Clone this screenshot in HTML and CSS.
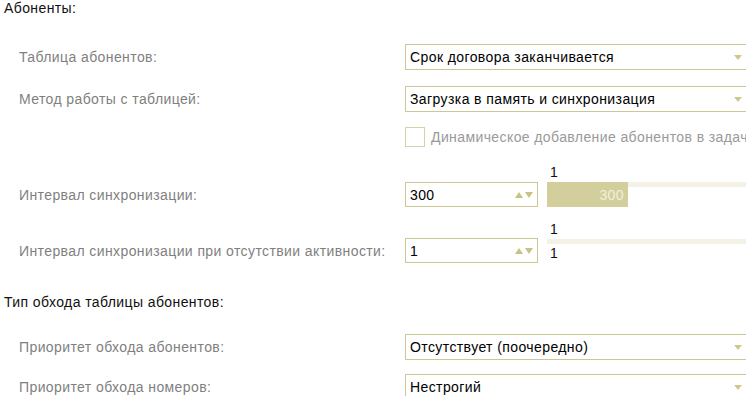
FILE: index.html
```html
<!DOCTYPE html>
<html>
<head>
<meta charset="utf-8">
<title>Абоненты</title>
<link rel="stylesheet" href="styles.css">
</head>
<body>
<div class="form">
  <div class="section">Абоненты:</div>

  <div class="row row-first">
    <div class="label">Таблица абонентов:</div>
    <div class="field select"><span class="value">Срок договора заканчивается</span><span class="drop"></span></div>
  </div>

  <div class="row row-second">
    <div class="label">Метод работы с таблицей:</div>
    <div class="field select"><span class="value">Загрузка в память и синхронизация</span><span class="drop"></span></div>
  </div>

  <div class="row row-check">
    <div class="label"></div>
    <div class="check-wrap"><span class="check"></span><span class="check-text">Динамическое добавление абонентов в задачу</span></div>
  </div>

  <div class="row row-slider">
    <div class="label">Интервал синхронизации:</div>
    <div class="spin-line">
      <div class="field spin"><span class="value">300</span><span class="arrows"><span class="up"></span><span class="down"></span></span></div>
      <div class="slider">
        <span class="min">1</span>
        <div class="track"><div class="fill" style="width: 81px"><span>300</span></div></div>
      </div>
    </div>
  </div>

  <div class="row row-slider2">
    <div class="label">Интервал синхронизации при отсутствии активности:</div>
    <div class="spin-line">
      <div class="field spin"><span class="value">1</span><span class="arrows"><span class="up"></span><span class="down"></span></span></div>
      <div class="slider slider-empty">
        <span class="min">1</span>
        <div class="track"></div>
        <span class="cur">1</span>
      </div>
    </div>
  </div>

  <div class="section section-second">Тип обхода таблицы абонентов:</div>

  <div class="row row-third">
    <div class="label">Приоритет обхода абонентов:</div>
    <div class="field select"><span class="value">Отсутствует (поочередно)</span><span class="drop"></span></div>
  </div>

  <div class="row row-fourth">
    <div class="label">Приоритет обхода номеров:</div>
    <div class="field select"><span class="value">Нестрогий</span><span class="drop"></span></div>
  </div>
</div>
</body>
</html>
```

FILE: styles.css
```css
html, body {
    margin: 0;
    background: #fff;
    overflow: hidden;
}
.form {
    width: 746px;
    height: 396px;
    font-family: "Liberation Sans", Arial, sans-serif;
    font-size: 14px;
    letter-spacing: 0.4px;
    display: flex;
    flex-direction: column;
}
.section {
    color: #111;
    padding-left: 4px;
    height: 17px;
    line-height: 17px;
}
.section-second {
    margin-top: 31px;
}
.row {
    display: flex;
    align-items: center;
    flex-shrink: 0;
}
.label {
    width: 386px;
    flex-shrink: 0;
    padding-left: 19px;
    color: #7f7f7f;
    white-space: nowrap;
}
.row-first { margin-top: 27px; }
.row-second { margin-top: 16px; }
.row-check { margin-top: 15px; height: 20px; }
.row-slider { margin-top: 17px; align-items: flex-end; }
.row-slider .label { padding-bottom: 4px; }
.row-slider2 { margin-top: 14px; align-items: flex-end; }
.row-slider2 .label { padding-bottom: 4px; }
.row-third { margin-top: 23px; }
.row-fourth { margin-top: 14px; }

.field {
    box-sizing: border-box;
    height: 26px;
    border: 1px solid #cdc796;
    background: #fff;
    display: flex;
    align-items: center;
    color: #000;
}
.select {
    width: 350px;
    flex-shrink: 0;
}
.value {
    padding-left: 4px;
    flex: 1;
    white-space: nowrap;
}
.drop {
    width: 0;
    height: 0;
    border-left: 4px solid transparent;
    border-right: 4px solid transparent;
    border-top: 5px solid #cfc88c;
    margin-right: 6px;
    margin-left: auto;
}
.select .drop {
    position: relative;
    left: -6px;
}
.check-wrap {
    display: flex;
    align-items: center;
    gap: 6px;
}
.check {
    box-sizing: border-box;
    width: 20px;
    height: 20px;
    border: 1px solid #d6d1a8;
    background: #fff;
}
.check-text {
    color: #9a9a9a;
    white-space: nowrap;
}
.spin-line {
    display: flex;
    align-items: flex-end;
}
.spin {
    width: 133px;
    height: 25px;
}
.arrows {
    display: flex;
    gap: 2px;
    margin-right: 4px;
}
.up, .down {
    width: 0;
    height: 0;
    border-left: 4px solid transparent;
    border-right: 4px solid transparent;
}
.up { border-bottom: 6px solid #c9c283; }
.down { border-top: 6px solid #c9c283; }
.slider {
    margin-left: 9px;
    width: 210px;
    display: flex;
    flex-direction: column;
}
.slider .min, .slider .cur {
    color: #111;
    padding-left: 3px;
    height: 16px;
    line-height: 16px;
}
.slider .min { margin-bottom: 2px; }
.track {
    height: 25px;
    background: linear-gradient(#f4f2e6, #f4f2e6) top / 100% 5px no-repeat;
}
.fill {
    height: 100%;
    background: #d3cf9d;
    display: flex;
    align-items: center;
    justify-content: flex-end;
}
.fill span {
    color: #f1efdf;
    padding-right: 4px;
}
.slider-empty .track {
    height: 5px;
    background: #f4f2e6;
}
.slider-empty .cur {
    margin-top: 1px;
    margin-bottom: 2px;
}
```
